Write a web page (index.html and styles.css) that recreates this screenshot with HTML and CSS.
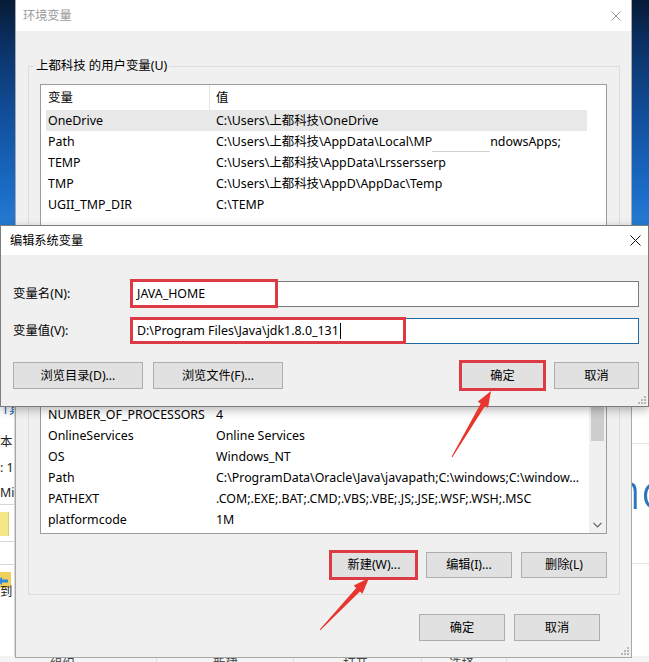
FILE: index.html
```html
<!DOCTYPE html>
<html lang="zh-CN">
<head>
<meta charset="utf-8">
<title>环境变量</title>
<link rel="stylesheet" href="styles.css">
</head>
<body>
<div class="screen">
  <div class="desktop"></div>

  <div class="explorer">
    <div class="exp-main">
      <div class="exp-left">
        <div class="el l1 link">T具</div>
        <div class="el l2">本</div>
        <div class="el l3">: 1(</div>
        <div class="el l4">Mic</div>
        <div class="el-sep s1"></div>
        <div class="el-yellow"></div>
        <div class="el-sep s2"></div>
        <div class="el-sep s3"></div>
        <svg class="el-folder" width="14" height="18" viewBox="0 0 14 18">
          <rect x="3" y="0" width="11" height="16" fill="#f1cf5c"/>
          <path d="M0 9 L5 5 L5 7.5 L11 7.5 L11 10.5 L5 10.5 L5 13 Z" fill="#2e8ae0"/>
        </svg>
        <div class="el l5">到</div>
      </div>
      <div class="exp-center"></div>
      <div class="exp-right">
        <div class="er-top"></div>
        <div class="er-big">nc</div>
        <div class="er-line"></div>
      </div>
    </div>
    <div class="exp-ribbon">
      <div class="rb r1">组织</div>
      <div class="rb r2">新建</div>
      <div class="rb r3">打开</div>
      <div class="rb r4">选择</div>
    </div>
  </div>

  <div class="win env">
    <div class="titlebar">
      <span class="title inactive">环境变量</span>
      <svg class="xicon env-x" width="10" height="10" viewBox="0 0 10 10"><path d="M0.5 0.5 L9.5 9.5 M9.5 0.5 L0.5 9.5" stroke="#9a9a9a" stroke-width="1"/></svg>
    </div>
    <div class="env-body">
      <fieldset class="group user">
        <legend>上都科技 的用户变量(U)</legend>
        <div class="list user-list">
          <div class="list-main">
            <div class="list-head"><div class="hc1">变量</div><div class="hc2">值</div></div>
            <div class="row sel"><div class="c1">OneDrive</div><div class="c2">C:\Users\上都科技\OneDrive</div></div>
            <div class="row"><div class="c1">Path</div><div class="c2">C:\Users\上都科技\AppData\Local\MP<span class="blot"></span>ndowsApps;</div></div>
            <div class="row"><div class="c1">TEMP</div><div class="c2">C:\Users\上都科技\AppData\Lrssersserp</div></div>
            <div class="row"><div class="c1">TMP</div><div class="c2">C:\Users\上都科技\AppD\AppDac\Temp</div></div>
            <div class="row"><div class="c1">UGII_TMP_DIR</div><div class="c2">C:\TEMP</div></div>
          </div>
        </div>
        <div class="group-btns user-btns">
          <button class="btn gbtn">新建(N)...</button>
          <button class="btn gbtn">编辑(E)...</button>
          <button class="btn gbtn">删除(D)</button>
        </div>
      </fieldset>

      <fieldset class="group sys">
        <legend>系统变量(S)</legend>
        <div class="list sys-list">
          <div class="list-main">
            <div class="list-head"><div class="hc1">变量</div><div class="hc2">值</div></div>
            <div class="row"><div class="c1">ComSpec</div><div class="c2">C:\windows\system32\cmd.exe</div></div>
            <div class="row"><div class="c1">DriverData</div><div class="c2">C:\Windows\System32\Drivers\DriverData</div></div>
            <div class="row"><div class="c1">NUMBER_OF_PROCESSORS</div><div class="c2">4</div></div>
            <div class="row"><div class="c1">OnlineServices</div><div class="c2">Online Services</div></div>
            <div class="row"><div class="c1">OS</div><div class="c2">Windows_NT</div></div>
            <div class="row"><div class="c1">Path</div><div class="c2">C:\ProgramData\Oracle\Java\javapath;C:\windows;C:\window...</div></div>
            <div class="row"><div class="c1">PATHEXT</div><div class="c2">.COM;.EXE;.BAT;.CMD;.VBS;.VBE;.JS;.JSE;.WSF;.WSH;.MSC</div></div>
            <div class="row"><div class="c1">platformcode</div><div class="c2">1M</div></div>
          </div>
          <div class="vscroll">
            <div class="sb-arrow up"></div>
            <div class="sb-track"><div class="sb-thumb"></div></div>
            <div class="sb-arrow down">
              <svg width="9" height="6" viewBox="0 0 9 6"><path d="M0.5 0.8 L4.5 4.8 L8.5 0.8" fill="none" stroke="#606060" stroke-width="1.2"/></svg>
            </div>
          </div>
        </div>
        <div class="group-btns sys-btns">
          <button class="btn gbtn">新建(W)...</button>
          <button class="btn gbtn">编辑(I)...</button>
          <button class="btn gbtn">删除(L)</button>
        </div>
      </fieldset>

      <div class="env-foot">
        <button class="btn fbtn">确定</button>
        <button class="btn fbtn">取消</button>
      </div>
    </div>
    <svg class="grip" width="9" height="9" viewBox="0 0 9 9">
      <g fill="#b8b8b8"><rect x="7" y="1" width="2" height="2"/><rect x="4" y="4" width="2" height="2"/><rect x="7" y="4" width="2" height="2"/><rect x="1" y="7" width="2" height="2"/><rect x="4" y="7" width="2" height="2"/><rect x="7" y="7" width="2" height="2"/></g>
    </svg>
  </div>

  <div class="win edit">
    <div class="titlebar edit-title">
      <span class="title">编辑系统变量</span>
      <svg class="xicon edit-x" width="11" height="11" viewBox="0 0 11 11"><path d="M0.5 0.5 L10.5 10.5 M10.5 0.5 L0.5 10.5" stroke="#111" stroke-width="1"/></svg>
    </div>
    <div class="edit-body">
      <div class="field">
        <label class="flabel">变量名(N):</label>
        <div class="input">JAVA_HOME</div>
      </div>
      <div class="field f2">
        <label class="flabel">变量值(V):</label>
        <div class="input focus">D:\Program Files\Java\jdk1.8.0_131<span class="caret"></span></div>
      </div>
      <div class="edit-btns">
        <button class="btn wbtn">浏览目录(D)...</button>
        <button class="btn wbtn">浏览文件(F)...</button>
        <span class="spacer"></span>
        <button class="btn ebtn">确定</button>
        <button class="btn ebtn">取消</button>
      </div>
    </div>
    <svg class="grip" width="9" height="9" viewBox="0 0 9 9">
      <g fill="#b8b8b8"><rect x="7" y="1" width="2" height="2"/><rect x="4" y="4" width="2" height="2"/><rect x="7" y="4" width="2" height="2"/><rect x="1" y="7" width="2" height="2"/><rect x="4" y="7" width="2" height="2"/><rect x="7" y="7" width="2" height="2"/></g>
    </svg>
  </div>

  <svg class="annot" width="649" height="662" viewBox="0 0 649 662">
    <g fill="none" stroke="#dc3a44" stroke-width="3">
      <rect x="131.5" y="280.5" width="145" height="26"/>
      <rect x="131.5" y="318.5" width="273" height="24"/>
      <rect x="460.5" y="361.5" width="84" height="28"/>
      <rect x="330.5" y="551.5" width="86" height="27"/>
    </g>
    <g fill="#e8352e">
      <polygon points="451.6,456.7 480.7,403.5 477.7,401.7 491,391 488.0,407.8 485.0,406.0 452.4,457.3"/>
      <polygon points="319.6,629.7 356.2,587.9 353.7,585.5 369,578 362.4,593.8 359.9,591.4 320.4,630.3"/>
    </g>
  </svg>
</div>
</body>
</html>
```

FILE: styles.css
```css
* { box-sizing: border-box; }
html, body { margin: 0; padding: 0; }
body {
  width: 649px;
  height: 662px;
  overflow: hidden;
  font-family: "Noto Sans", "Noto Sans CJK SC", sans-serif;
  font-size: 12.4px;
  color: #000;
  background: #fff;
}
.screen { position: relative; width: 649px; height: 662px; overflow: hidden; }

/* desktop */
.desktop {
  position: absolute; left: 0; top: 0; width: 649px; height: 406px;
  background: linear-gradient(180deg, #071b36 0px, #0b3166 45px, #12519e 120px, #1a6bc6 190px, #2a80d6 240px, #2a80d6 406px);
}

/* explorer window behind */
.explorer {
  position: absolute; left: 0; top: 406px; width: 649px; height: 256px;
  background: #fff; display: flex; flex-direction: column;
}
.exp-main { flex: 1; display: grid; grid-template-columns: 15px 1fr 17px; overflow: hidden; }
.exp-left { overflow: hidden; display: flex; flex-direction: column; white-space: nowrap; border-right: 1px solid #d8d8d8; }
.el { line-height: 16px; height: 16px; color: #222; }
.el.link { color: #1a66c0; }
.l1 { margin-top: -4px; padding-left: 2px; }
.l2 { margin-top: 16px; }
.l3 { margin-top: 10px; }
.l4 { margin-top: 9px; }
.el-sep { border-top: 1px solid #d6d6d6; height: 0; }
.s1 { margin-top: 3px; }
.el-yellow { margin-top: 7px; width: 9px; height: 24px; background: #f4e889; border-right: 1px solid #d9cf78; }
.s2 { margin-top: 5px; }
.s3 { margin-top: 22px; }
.el-folder { margin-top: 7px; display: block; margin-left: -3px; }
.l5 { margin-top: -6px; }
.exp-right { overflow: hidden; white-space: nowrap; }
.er-top { height: 38px; border-bottom: 1px solid #e3e3e3; }
.er-big {
  margin-top: 19px; margin-left: -22px;
  font-size: 52px; line-height: 52px; height: 52px;
  font-weight: 300; color: #2a76bd;
}
.er-line { margin-top: 48px; border-bottom: 1px solid #e3e3e3; }
.exp-ribbon { height: 6px; overflow: hidden; background: #f4f4f4; display: flex; }
.rb { line-height: 16px; color: #444; border-right: 1px solid #dedede; height: 16px; }
.r1 { width: 157px; padding-left: 50px; }
.r2 { width: 137px; padding-left: 56px; }
.r3 { width: 128px; padding-left: 49px; }
.r4 { width: 85px; padding-left: 27px; }

/* windows */
.win { position: absolute; display: flex; flex-direction: column; }
.env {
  left: 15px; top: 0; width: 617px; height: 658px;
  background: #f0f0f0; border: 1px solid #a8a8a8; border-top: none;
}
.titlebar {
  display: flex; align-items: center; justify-content: space-between;
  background: #fff; flex: none;
}
.env .titlebar { height: 31px; padding-left: 7px; }
.title { font-size: 12.2px; line-height: 16px; }
.title.inactive { color: #9a9a9a; }
.xicon { display: block; }
.env-x { margin-right: 10px; }

.env-body { flex: 1; padding: 27px 11px 0 12px; display: flex; flex-direction: column; }
.group {
  margin: 0; border: 1px solid #dcdcdc; min-width: 0;
  padding: 10px 12px 17px 11px;
}
.group legend {
  margin-left: -6px; padding: 0 2px; line-height: 16px; font-size: 12.4px;
}
.group.sys { padding-bottom: 16px; }

.list { background: #fff; border: 1px solid #9c9c9c; display: flex; overflow: hidden; }
.user-list { height: 166px; }
.sys-list { height: 198px; }
.list-main { flex: 1; min-width: 0; overflow: hidden; }
.list-head { display: flex; height: 25px; align-items: center; line-height: 16px; }
.hc1 { width: 168px; padding-left: 7px; flex: none; }
.hc2 { flex: 1; padding-left: 6px; border-left: 1px solid #e5e5e5; height: 25px; line-height: 25px; }
.row { display: flex; height: 21px; line-height: 21px; margin-left: 5px; width: 541px; white-space: nowrap; }
.row.sel { background: #e8e8e8; }
.c1 { width: 163px; padding-left: 2px; flex: none; overflow: hidden; }
.c2 { flex: 1; padding-left: 7px; overflow: hidden; }
.blot { display: inline-block; width: 58px; height: 18px; vertical-align: middle; background: #fff; border-bottom: 1px solid #cfcfcf; }

.vscroll { width: 17px; flex: none; background: #f0f0f0; display: flex; flex-direction: column; }
.sb-arrow { height: 17px; display: flex; align-items: center; justify-content: center; flex: none; }
.sb-track { flex: 1; }
.sb-thumb { height: 87px; background: #cdcdcd; margin: 0 2px; }

.group-btns { display: flex; justify-content: flex-end; gap: 9px; }
.user-btns { margin-top: 16px; }
.sys-btns { margin-top: 18px; }

.btn {
  font-family: inherit; font-size: 12.2px; color: #000;
  background: #e1e1e1; border: 1px solid #adadad; border-radius: 0;
  padding: 0; margin: 0; display: flex; align-items: center; justify-content: center;
  line-height: 16px; white-space: nowrap;
}
.gbtn { width: 86px; height: 26px; }
.env-foot { display: flex; justify-content: flex-end; gap: 9px; margin-top: 19px; padding-right: 20px; }
.fbtn { width: 86px; height: 27px; }

.grip { position: absolute; right: 2px; bottom: 2px; }

/* edit dialog */
.edit {
  left: 0; top: 225px; width: 649px; height: 182px;
  background: #f0f0f0; border: 1px solid #7d7d7d;
  box-shadow: 0 3px 9px rgba(0,0,0,0.28);
}
.edit-title { height: 29px; padding-left: 9px; }
.edit-x { margin-right: 7px; }
.edit-body { flex: 1; padding: 26px 9px 0 12px; display: flex; flex-direction: column; }
.field { display: grid; grid-template-columns: 117px 1fr; align-items: center; height: 26px; }
.f2 { margin-top: 11px; }
.flabel { line-height: 16px; }
.input {
  height: 26px; background: #fff; border: 1px solid #7a7a7a;
  padding-left: 6px; line-height: 24px; white-space: nowrap; overflow: hidden;
}
.input.focus { border-color: #1f6aa5; }
.caret { display: inline-block; width: 1px; height: 16px; background: #000; vertical-align: middle; margin-left: 1px; margin-top: -2px; }
.edit-btns { display: flex; margin-top: 18px; height: 27px; gap: 10px; }
.wbtn { width: 130px; height: 27px; }
.spacer { flex: 1; }
.ebtn { width: 85px; height: 27px; }
.ebtn + .ebtn { margin-left: -1px; }

.annot { position: absolute; left: 0; top: 0; pointer-events: none; }
```
